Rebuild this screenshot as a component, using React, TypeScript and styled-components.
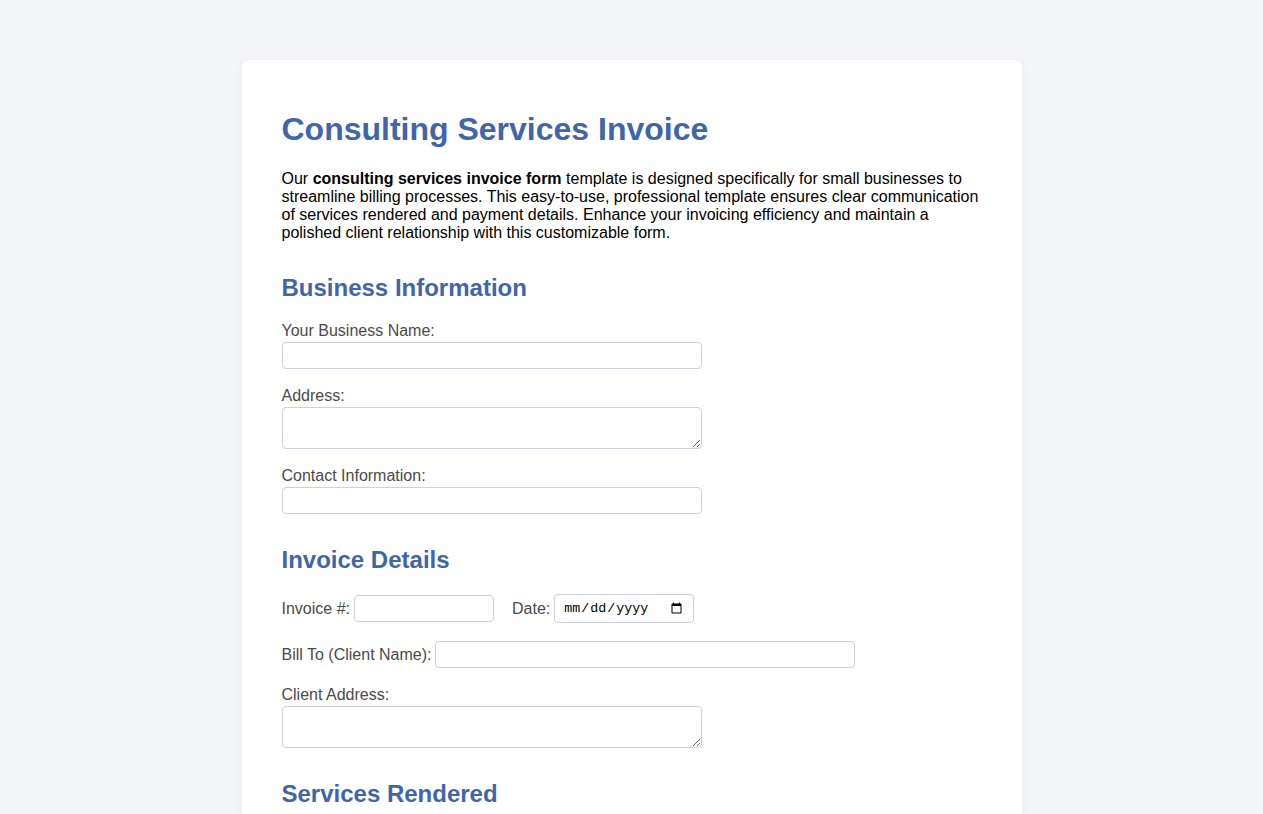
import { createGlobalStyle, styled } from "styled-components";

const GlobalStyle = createGlobalStyle`
  * {
    box-sizing: border-box;
  }
  body {
    margin: 0;
    background: #f4f5f8;
    font-family: "Liberation Sans", Arial, sans-serif;
    color: #000000;
  }
`;

const services = [
  { desc: "Strategy consultation", hours: "", rate: "" },
  { desc: "Process review", hours: "", rate: "" },
  { desc: "Implementation support", hours: "", rate: "" },
];

const App = (): JSX.Element => {
  return (
    <>
      <GlobalStyle />
      <Card>
        <Title>Consulting Services Invoice</Title>
        <Intro>
          Our <strong>consulting services invoice form</strong> template is
          designed specifically for small businesses to streamline billing
          processes. This easy-to-use, professional template ensures clear
          communication of services rendered and payment details. Enhance your
          invoicing efficiency and maintain a polished client relationship with
          this customizable form.
        </Intro>

        <form onSubmit={(e) => e.preventDefault()}>
          <SectionTitle>Business Information</SectionTitle>
          <Field>
            <Label htmlFor="business-name">Your Business Name:</Label>
            <TextInput id="business-name" type="text" />
          </Field>
          <Field>
            <Label htmlFor="business-address">Address:</Label>
            <TextArea id="business-address" />
          </Field>
          <Field>
            <Label htmlFor="contact">Contact Information:</Label>
            <TextInput id="contact" type="text" />
          </Field>

          <SectionTitle>Invoice Details</SectionTitle>
          <Row>
            <InlineGroup>
              <InlineLabel htmlFor="invoice-no">Invoice #:</InlineLabel>
              <TextInput id="invoice-no" type="text" $width={140} />
            </InlineGroup>
            <InlineGroup>
              <InlineLabel htmlFor="invoice-date">Date:</InlineLabel>
              <DateInput id="invoice-date" type="date" />
            </InlineGroup>
          </Row>
          <Row>
            <InlineGroup>
              <InlineLabel htmlFor="client-name">Bill To (Client Name):</InlineLabel>
              <TextInput id="client-name" type="text" />
            </InlineGroup>
          </Row>
          <Field>
            <Label htmlFor="client-address">Client Address:</Label>
            <TextArea id="client-address" />
          </Field>

          <SectionTitle>Services Rendered</SectionTitle>
          <Table>
            <thead>
              <tr>
                <th>Description</th>
                <th>Hours</th>
                <th>Rate</th>
                <th>Amount</th>
              </tr>
            </thead>
            <tbody>
              {services.map((s) => (
                <tr key={s.desc}>
                  <td>
                    <TextInput type="text" placeholder={s.desc} />
                  </td>
                  <td>
                    <TextInput type="text" $width={80} />
                  </td>
                  <td>
                    <TextInput type="text" $width={80} />
                  </td>
                  <td>
                    <TextInput type="text" $width={100} />
                  </td>
                </tr>
              ))}
            </tbody>
          </Table>

          <SectionTitle>Payment Details</SectionTitle>
          <Field>
            <Label htmlFor="terms">Payment Terms:</Label>
            <TextArea id="terms" />
          </Field>
          <Submit type="submit">Submit Invoice</Submit>
        </form>
      </Card>
    </>
  );
};

export default App;

const Card = styled.div`
  width: 780px;
  margin: 60px auto 40px;
  padding: 40px;
  background: #ffffff;
  border-radius: 8px;
  box-shadow: 0 2px 10px rgba(0, 0, 0, 0.05);
`;

const Title = styled.h1`
  margin: 11px 0 22px;
  font-size: 32px;
  font-weight: 700;
  color: #4065ab;
`;

const Intro = styled.p`
  margin: 0;
  font-size: 16px;
  line-height: normal;

  strong {
    font-weight: 700;
  }
`;

const SectionTitle = styled.h2`
  margin: 32px 0 20px;
  font-size: 24px;
  font-weight: 700;
  color: #4065ab;
`;

const Field = styled.div`
  margin-bottom: 18px;
`;

const Label = styled.label`
  display: block;
  margin-bottom: 2px;
  font-size: 16px;
  color: #4a4a4a;
`;

const Row = styled.div`
  display: flex;
  align-items: center;
  gap: 18px;
  margin-bottom: 18px;
`;

const InlineGroup = styled.div`
  display: flex;
  align-items: center;
`;

const InlineLabel = styled.label`
  margin-right: 4px;
  font-size: 16px;
  color: #4a4a4a;
`;

const TextInput = styled.input<{ $width?: number }>`
  display: block;
  width: ${(p) => (p.$width ? `${p.$width}px` : "420px")};
  height: 27px;
  padding: 5px;
  border: 1px solid #ccd0e1;
  border-radius: 4px;
  background: #ffffff;
  font-family: "Liberation Sans", Arial, sans-serif;
  font-size: 13.33px;
  outline: none;
`;

const DateInput = styled.input`
  display: block;
  width: 140px;
  height: 29px;
  padding: 4px 8px;
  border: 1px solid #ccd0e1;
  border-radius: 4px;
  background: #ffffff;
  font-family: "Liberation Mono", "DejaVu Sans Mono", monospace;
  font-size: 13.33px;
  color: #000000;
`;

const TextArea = styled.textarea`
  display: block;
  width: 420px;
  height: 42px;
  padding: 5px;
  border: 1px solid #ccd0e1;
  border-radius: 4px;
  font-family: "Liberation Sans", Arial, sans-serif;
  font-size: 13.33px;
  resize: vertical;
`;

const Table = styled.table`
  width: 100%;
  border-collapse: collapse;
  margin-bottom: 18px;

  th {
    padding: 8px 4px;
    text-align: left;
    font-size: 16px;
    font-weight: 700;
    color: #4a4a4a;
    border-bottom: 1px solid #ccd0e1;
  }

  td {
    padding: 6px 4px;
  }

  td:first-child input {
    width: 100%;
  }
`;

const Submit = styled.button`
  padding: 10px 20px;
  border: none;
  border-radius: 4px;
  background: #4065ab;
  color: #ffffff;
  font-family: "Liberation Sans", Arial, sans-serif;
  font-size: 16px;
  cursor: pointer;
`;
